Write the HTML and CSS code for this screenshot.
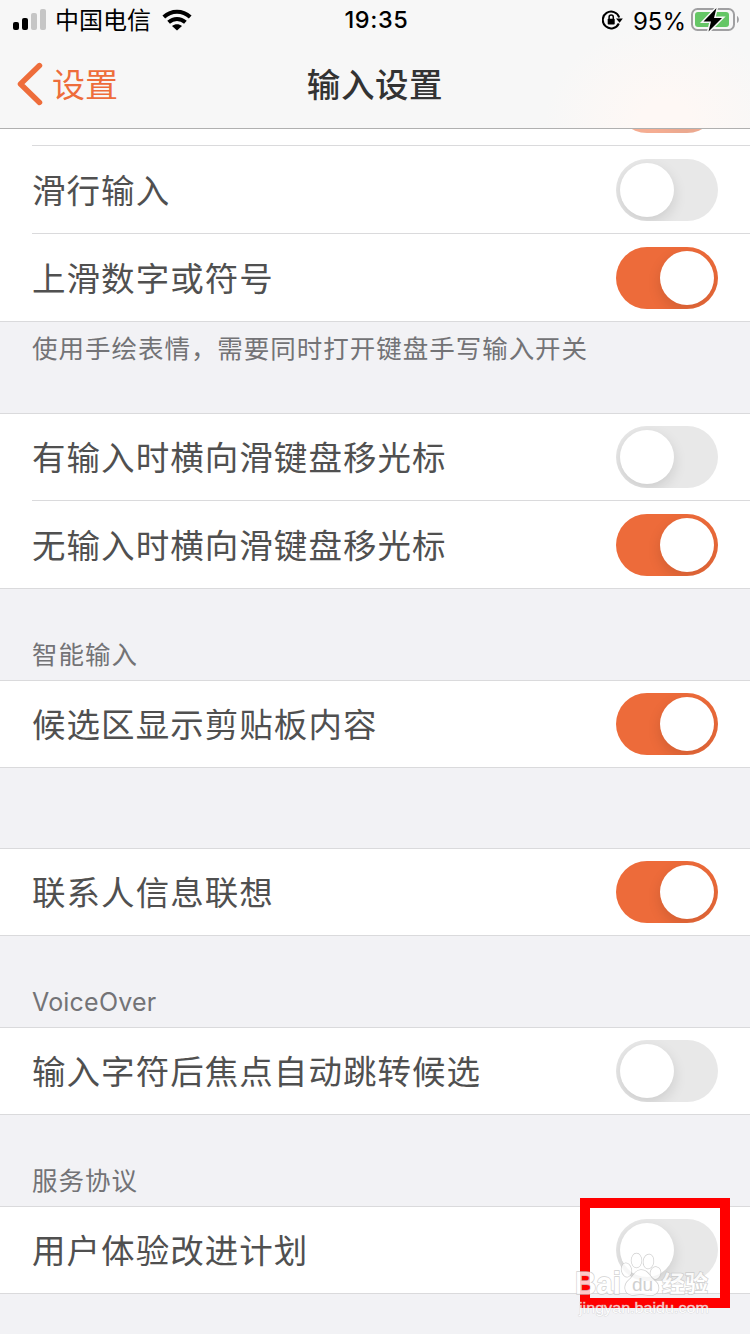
FILE: index.html
```html
<!DOCTYPE html>
<html lang="zh-CN">
<head>
<meta charset="utf-8">
<title>输入设置</title>
<link rel="stylesheet" href="styles.css">
</head>
<body>
<div class="screen">
  <header class="topbar">
    <div class="status">
      <div class="status-left">
        <svg class="signal" width="34" height="22" viewBox="0 0 34 22">
          <rect x="0" y="13" width="6" height="8" rx="2"/>
          <rect x="9" y="9" width="6" height="12" rx="2"/>
          <rect class="dim" x="18" y="4" width="6" height="17" rx="2"/>
          <rect class="dim" x="27" y="0" width="6" height="21" rx="2"/>
        </svg>
        <span class="carrier">中国电信</span>
        <svg class="wifi" width="30" height="22" viewBox="0 0 30 22">
          <path class="arc" d="M1.800 8C9.500.9 20.500.9 28.200 8"/>
          <path class="arc" d="M6.600 13.300C11.500 8.900 18.500 8.900 23.400 13.300"/>
          <path d="M15 21.500L10 17C13 14.500 17 14.500 20 17Z"/>
        </svg>
      </div>
      <span class="clock">19:35</span>
      <div class="status-right">
        <svg class="lock" width="21" height="20" viewBox="0 0 21 20">
          <path class="ring" d="M16.800 13.500A8.400 8.400 0 1 1 17.200 7.500"/>
          <path d="M14 8.500H20.800L17.600 12.800Z"/>
          <rect x="5.700" y="8.800" width="7" height="5.800" rx=".8"/>
          <path class="shackle" d="M7.100 9V7.200a2.100 2.100 0 0 1 4.200 0V9"/>
        </svg>
        <span class="percent">95%</span>
        <svg class="battery" width="49" height="26" viewBox="0 0 49 26">
          <rect class="case" x="1" y="2" width="42" height="21" rx="5.500"/>
          <rect class="charge" x="4" y="5" width="34" height="15" rx="3"/>
          <path class="tip" d="M46 9c2.500 1 2.500 6 0 7z"/>
          <path class="bolt" d="M25.500 1L12.500 14.500h7.500L17.500 24.500L31 11h-8Z"/>
        </svg>
      </div>
    </div>
    <nav class="nav">
      <a class="back">
        <svg width="26" height="44" viewBox="0 0 26 44"><path d="M22.500 3.600L3.500 22L22.500 40.400"/></svg>
        <span>设置</span>
      </a>
      <h1 class="title">输入设置</h1>
    </nav>
  </header>

  <main class="list">
    <section>
      <div class="row clipped"><i class="toggle on"></i></div>
      <div class="row tall inset-line"><span>滑行输入</span><i class="toggle"></i></div>
      <div class="row tall"><span>上滑数字或符号</span><i class="toggle on"></i></div>
    </section>
    <p class="note footer">使用手绘表情，需要同时打开键盘手写输入开关</p>
    <section class="group">
      <div class="row inset-line"><span>有输入时横向滑键盘移光标</span><i class="toggle"></i></div>
      <div class="row tall"><span>无输入时横向滑键盘移光标</span><i class="toggle on"></i></div>
    </section>
    <h2 class="note heading">智能输入</h2>
    <section class="group">
      <div class="row"><span>候选区显示剪贴板内容</span><i class="toggle on"></i></div>
    </section>
    <div class="gap"></div>
    <section class="group">
      <div class="row"><span>联系人信息联想</span><i class="toggle on"></i></div>
    </section>
    <h2 class="note heading latin">VoiceOver</h2>
    <section class="group">
      <div class="row"><span>输入字符后焦点自动跳转候选</span><i class="toggle"></i></div>
    </section>
    <h2 class="note heading">服务协议</h2>
    <section class="group">
      <div class="row"><span>用户体验改进计划</span><i class="toggle"></i></div>
    </section>
  </main>

  <div class="highlight"></div>
  <svg class="watermark" width="150" height="74" viewBox="0 0 150 74">
    <g class="mark">
      <text class="brand" x="4" y="47" textLength="46" lengthAdjust="spacingAndGlyphs">Bai</text>
      <ellipse cx="55.500" cy="23" rx="4.800" ry="6.800" transform="rotate(-12 55.500 23)"/>
      <ellipse cx="65.500" cy="13.500" rx="5" ry="7"/>
      <ellipse cx="77.500" cy="14.500" rx="5" ry="7" transform="rotate(8 77.500 14.500)"/>
      <ellipse cx="84.500" cy="26" rx="5" ry="6" transform="rotate(12 84.500 26)"/>
      <path d="M70 23c-6 0-7 6-12 10c-6 5-5 14 3 15c4 0 6-1 9-1s8 2 12 1c7-2 7-10 2-14C78 29 77 23 70 23Z"/>
      <text class="brand-cn" x="91" y="45" textLength="46">经验</text>
      <text class="site" x="8" y="66" textLength="130" lengthAdjust="spacingAndGlyphs">jingyan.baidu.com</text>
    </g>
    <text class="du" x="61" y="44">du</text>
  </svg>
</div>
</body>
</html>
```

FILE: styles.css
```css
* { box-sizing: border-box; }

body {
  margin: 0;
  font-family: "Noto Sans CJK SC", sans-serif;
}

.screen {
  position: relative;
  width: 750px;
  height: 1334px;
  overflow: hidden;
  background: #f2f2f5;
}

/* Status and navigation bars */
.topbar {
  height: 129px;
  border-bottom: 1px solid #b0b0b0;
  background: radial-gradient(ellipse 120px 95px at 665px 120px, #fef8f5 20%, #f7f7f7 100%) #f7f7f7;
}

.status {
  display: grid;
  grid-template-columns: 1fr auto 1fr;
  align-items: center;
  height: 40px;
  padding: 0 10px 0 13px;
  color: #000;
}

.status-left,
.status-right { display: flex; align-items: center; height: 39px; }

.status-right { justify-content: flex-end; }

.dim { fill: #c6c6c6; }

.carrier {
  margin: 0 11px 0 8px;
  padding-bottom: 2px;
  font-size: 24px;
  line-height: 36px;
}

.arc { fill: none; stroke: #000; stroke-width: 4; }

.clock {
  font: 500 23.500px/40px Inter, sans-serif;
  letter-spacing: .6px;
}

.ring { fill: none; stroke: #000; stroke-width: 2; }
.shackle { fill: none; stroke: #000; stroke-width: 1.500; }

.percent {
  margin: 0 5px 0 10px;
  padding-top: 2px;
  font: 400 24px/37px Inter, sans-serif;
}

.case { fill: none; stroke: #a0a0a2; stroke-width: 2; }
.charge { fill: #65c666; }
.tip { fill: #a0a0a2; }
.bolt { stroke: #f7f7f7; stroke-width: 3; paint-order: stroke; }

.nav {
  display: grid;
  grid-template-columns: 1fr auto 1fr;
  align-items: center;
  height: 88px;
  padding: 0 17px;
}

.back {
  display: flex;
  align-items: center;
  gap: 9px;
  color: #ee6d3b;
  font-size: 33px;
  line-height: 48px;
}

.back span,
.title { padding-bottom: 3px; }

.back path {
  fill: none;
  stroke: #ee6d3b;
  stroke-width: 5.500;
  stroke-linecap: round;
  stroke-linejoin: round;
}

.title {
  margin: 0;
  color: #333;
  font-size: 33.500px;
  font-weight: 500;
  line-height: 48px;
  letter-spacing: .6px;
}

/* Settings list */
.group { border-top: 1px solid #dadadc; }

.row {
  position: relative;
  display: flex;
  justify-content: space-between;
  align-items: flex-start;
  height: 87px;
  padding: 12px 32px 0;
  border-bottom: 1px solid #dadadc;
  background: #fff;
  color: #505050;
  font-size: 33.500px;
  line-height: 59px;
  letter-spacing: 1.050px;
}

.tall { height: 88px; padding-top: 13px; }

.inset-line,
.clipped {
  border-bottom: 0;
  background: linear-gradient(#dadadc, #dadadc) 32px 100% / 100% 1px no-repeat #fff;
}

.clipped {
  height: 17px;
  padding: 0 32px 13px;
  justify-content: flex-end;
  align-items: flex-end;
  overflow: hidden;
}

.clipped .toggle { opacity: .55; }

.toggle {
  display: flex;
  flex: none;
  width: 102px;
  height: 62px;
  padding: 4px;
  overflow: hidden;
  border-radius: 31px;
  background: #e8e8e8;
}

.toggle::before {
  content: "";
  width: 54px;
  height: 54px;
  border-radius: 50%;
  background: #fff;
  box-shadow: 0 5px 14px rgba(0, 0, 0, .12);
}

.on { justify-content: flex-end; background: #ed6b3a; }

.note {
  height: 91px;
  margin: 0;
  padding: 0 32px;
  color: #737376;
  font-size: 25.500px;
  font-weight: 400;
  line-height: 36px;
  letter-spacing: .980px;
}

.footer { padding-top: 7px; }
.heading { padding-top: 46px; }
.latin { padding-top: 48px; font-family: Inter, sans-serif; font-size: 25px; letter-spacing: .2px; }
.gap { height: 80px; }

/* Overlays */
.highlight {
  position: absolute;
  left: 580px;
  top: 1198px;
  width: 150px;
  height: 110px;
  border: 10px solid #f00;
}

.watermark {
  position: absolute;
  left: 571px;
  top: 1247px;
  overflow: visible;
}

.mark {
  fill: #fff;
  stroke: #c4c4c4;
  stroke-width: 1.400;
  paint-order: stroke;
  opacity: .78;
}

.brand { font: 700 31px "Liberation Sans", sans-serif; }
.brand-cn { font: 700 23px "Noto Sans CJK SC", sans-serif; }
.site { font: 500 15px "Liberation Sans", sans-serif; stroke-width: .6; }
.du { fill: #d0d0d0; font: 400 19px "Liberation Sans", sans-serif; }
```
